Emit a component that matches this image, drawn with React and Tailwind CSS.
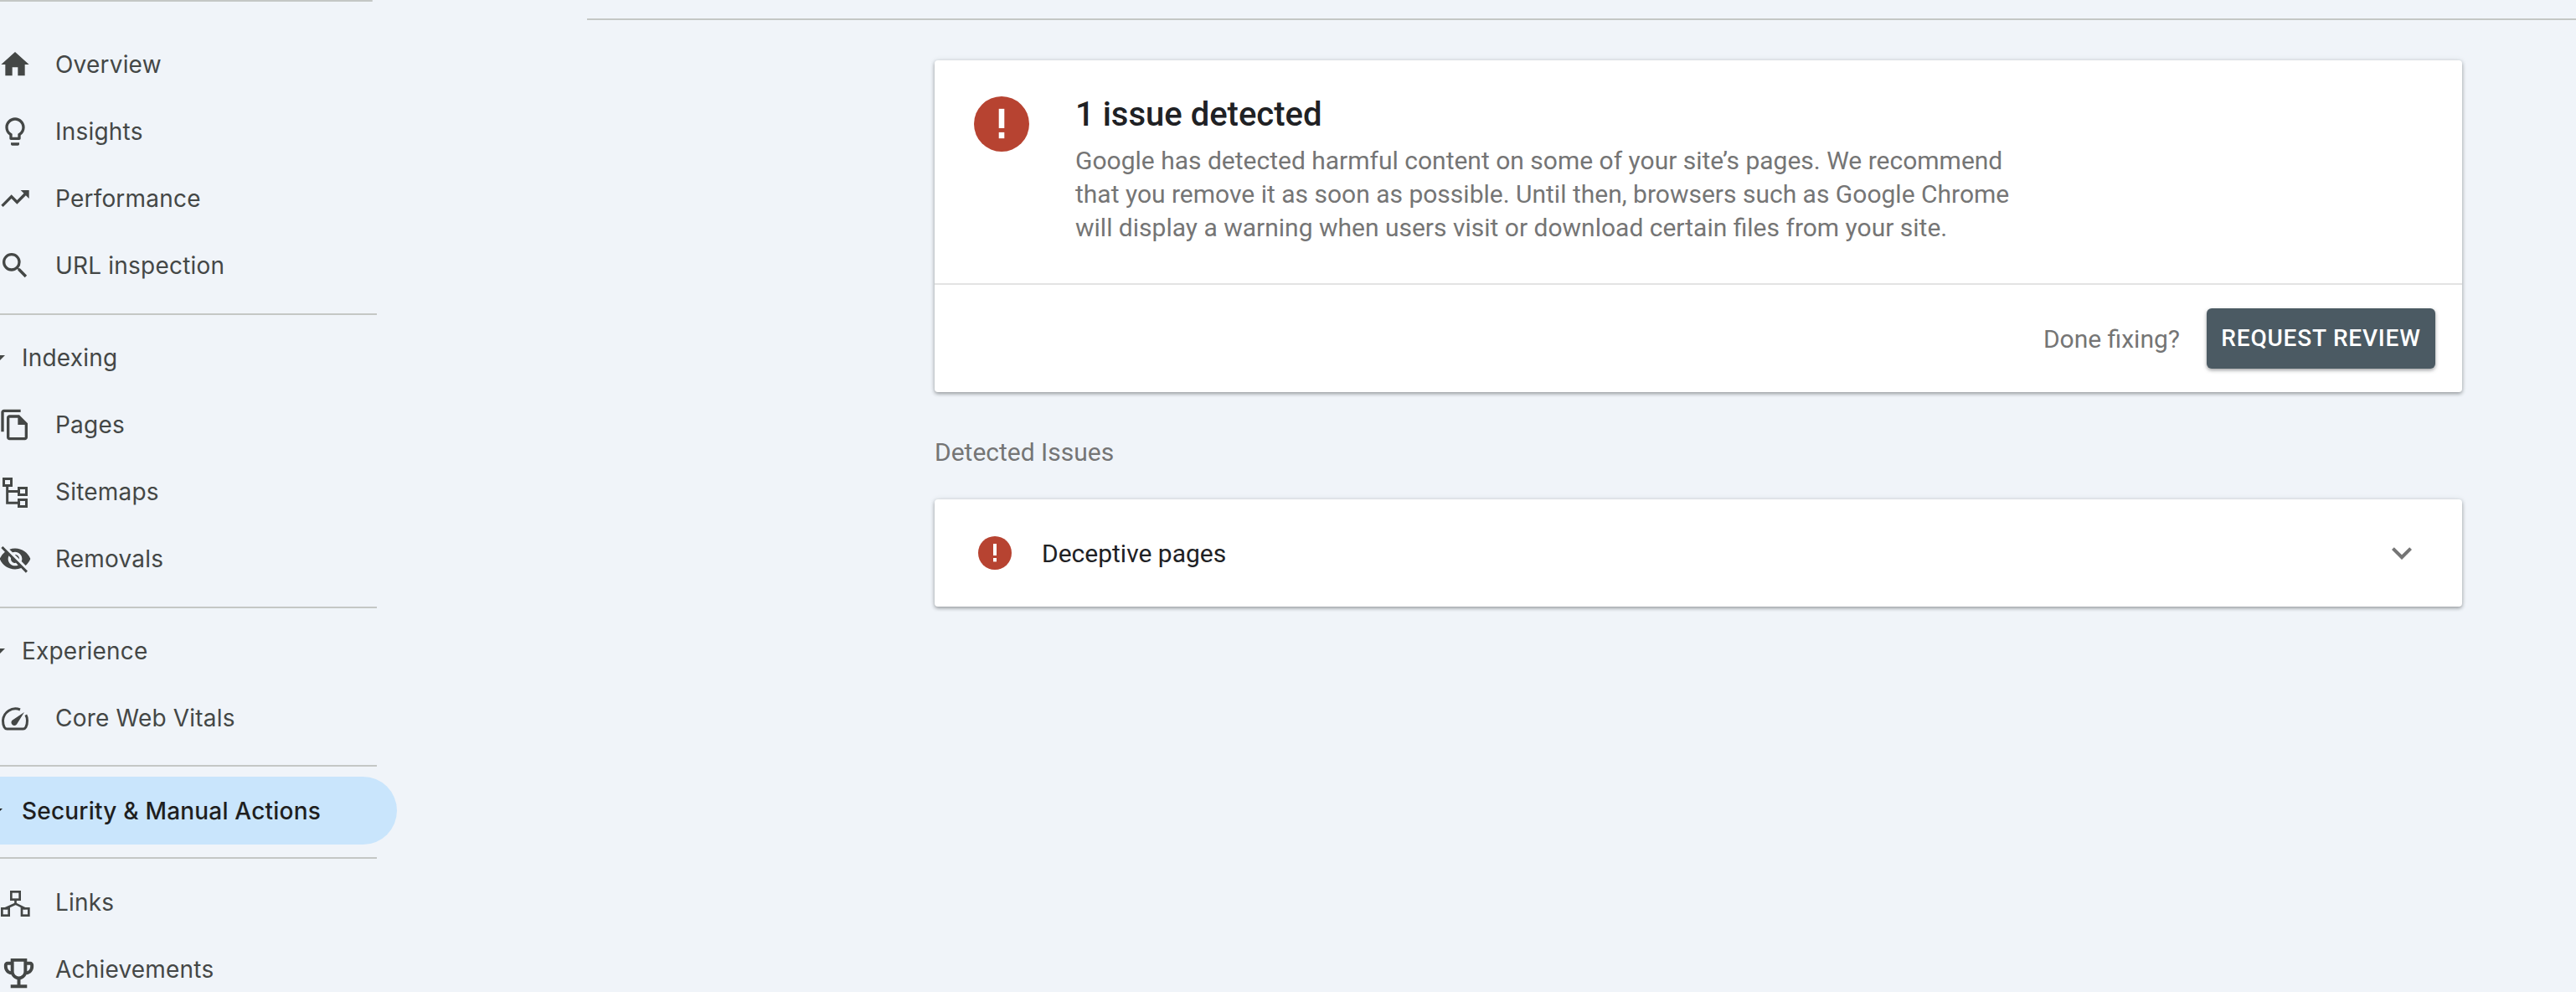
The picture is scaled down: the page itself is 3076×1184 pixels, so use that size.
import React from "react";
import {
  MdHome,
  MdOutlineLightbulb,
  MdTrendingUp,
  MdSearch,
  MdOutlineFileCopy,
  MdVisibilityOff,
  MdOutlineEmojiEvents,
  MdKeyboardArrowDown,
} from "react-icons/md";

const SitemapIcon = () => (
  <svg viewBox="0 0 24 24" className="w-[40px] h-[40px]" fill="none" stroke="currentColor" strokeWidth="1.8">
    <rect x="3.9" y="2.7" width="5.4" height="4.8" />
    <rect x="14.7" y="9.3" width="5.4" height="4.8" />
    <rect x="14.7" y="17.7" width="5.4" height="4.8" />
    <path d="M6.4 7.5V20h8.3M6.4 11.7h8.3" />
  </svg>
);

const GaugeIcon = () => (
  <svg viewBox="0 0 24 24" className="w-[40px] h-[40px]" fill="none" stroke="currentColor" strokeWidth="1.8">
    <path d="M15.6 6A9 9 0 0 0 3.3 13.8c0 2 .3 3.6 1 4.8.4.7 1 1.2 1.9 1.2h11.6c.9 0 1.5-.5 1.9-1.2.7-1.2 1-2.8 1-4.8 0-1.5-.3-2.8-1-4" />
    <path d="M9.9 13.6 18.6 7.8l-5.4 8.7a2.2 2.2 0 1 1-3.3-2.9z" fill="currentColor" stroke="none" />
  </svg>
);

const LinksIcon = () => (
  <svg viewBox="0 0 24 24" className="w-[40px] h-[40px]" fill="none" stroke="currentColor" strokeWidth="1.6">
    <rect x="9.2" y="4.4" width="6.2" height="5.6" />
    <rect x="2.6" y="16.4" width="5" height="5" />
    <rect x="16.8" y="16.4" width="5" height="5" />
    <path d="M12.3 10v3M12.3 13 5 16.4M12.3 13l7 3.4" />
  </svg>
);

const AlertCircle = ({ className }) => (
  <svg viewBox="0 0 20 20" className={className}>
    <circle cx="10" cy="10" r="10" fill="#b74331" />
    <rect x="9" y="4.5" width="2" height="7" fill="#fff" />
    <rect x="9" y="13" width="2" height="2.2" fill="#fff" />
  </svg>
);

const font = "font-['Inter','Liberation_Sans',sans-serif]";

function NavRow({ icon, label }) {
  return (
    <div className={`flex items-center h-[80px] text-[#444746] ${font} text-[28px] tracking-[0.2px]`}>
      <span className="w-[40px] h-[40px] -ml-[2px] flex items-center justify-center text-[40px] shrink-0">{icon}</span>
      <span className="ml-[28px]">{label}</span>
    </div>
  );
}

function SectionRow({ label }) {
  return (
    <div className={`flex items-center h-[80px] text-[#444746] ${font} text-[28px] tracking-[0.2px]`}>
      <svg viewBox="0 0 12 6" className="w-[12px] h-[6px] -ml-[6px] shrink-0" fill="currentColor">
        <path d="M0 0h12L6 6z" />
      </svg>
      <span className="ml-[20px]">{label}</span>
    </div>
  );
}

const Divider = ({ className }) => <div className={`h-[2px] w-[450px] bg-[#c4c7c5] ${className}`} />;

export default function App() {
  return (
    <div className="flex w-[3076px] h-[1184px] overflow-hidden bg-[#f0f4f9] font-['Roboto',sans-serif]">
      <aside className="w-[701px] shrink-0">
        <div className="h-[2px] w-[445px] bg-[#c4c7c5] rounded-r" />
        <div className="mt-[35px]">
          <NavRow icon={<MdHome />} label="Overview" />
          <NavRow icon={<MdOutlineLightbulb />} label="Insights" />
          <NavRow icon={<MdTrendingUp />} label="Performance" />
          <NavRow icon={<MdSearch />} label="URL inspection" />
        </div>
        <Divider className="mt-[17px]" />
        <div className="mt-[11px]">
          <SectionRow label="Indexing" />
          <NavRow icon={<MdOutlineFileCopy />} label="Pages" />
          <NavRow icon={<SitemapIcon />} label="Sitemaps" />
          <NavRow icon={<MdVisibilityOff />} label="Removals" />
        </div>
        <Divider className="mt-[17px]" />
        <div className="mt-[11px]">
          <SectionRow label="Experience" />
          <NavRow icon={<GaugeIcon />} label="Core Web Vitals" />
        </div>
        <Divider className="mt-[16px]" />
        <div className={`mt-[12px] flex items-center h-[81px] w-[474px] rounded-r-full bg-[#c9e5fc] text-[#1f1f1f] ${font} text-[28px] tracking-[0.2px]`}>
          <svg viewBox="0 0 12 6" className="w-[12px] h-[6px] -ml-[9px] shrink-0" fill="currentColor">
            <path d="M0 0h12L6 6z" />
          </svg>
          <span className="ml-[23px] font-medium">Security &amp; Manual Actions</span>
        </div>
        <Divider className="mt-[15px]" />
        <div className="mt-[12px]">
          <NavRow icon={<LinksIcon />} label="Links" />
          <NavRow
            icon={<MdOutlineEmojiEvents className="shrink-0 text-[47px] translate-x-[4px] translate-y-[4px]" />}
            label="Achievements"
          />
        </div>
      </aside>

      <main className="flex-1 min-w-0">
        <div className="h-[2px] mt-[22px] bg-[#c4c7c5]" />
        <div className="ml-[415px] w-[1824px] mt-[48px]">
          <section className="bg-white rounded-[4px] shadow-[0_2px_4px_rgba(60,64,67,0.45),0_0_6px_rgba(60,64,67,0.12)]">
            <div className="flex h-[266px] pt-[43px] pl-[47px]">
              <AlertCircle className="w-[66px] h-[66px] shrink-0" />
              <div className="ml-[55px]">
                <h1 className="mt-[2px] text-[40px] leading-[40px] font-medium text-[#202124]">1 issue detected</h1>
                <p className="mt-[15px] w-[1140px] text-[30px] leading-[40px] text-[#757575]">
                  Google has detected harmful content on some of your site’s pages. We recommend
                  <br />
                  that you remove it as soon as possible. Until then, browsers such as Google Chrome
                  <br />
                  will display a warning when users visit or download certain files from your site.
                </p>
              </div>
            </div>
            <div className="flex items-center justify-end h-[130px] border-t-2 border-[#e3e3e3] pr-[32px]">
              <span className="text-[30px] text-[#757575]">Done fixing?</span>
              <button className="ml-[32px] w-[273px] h-[72px] rounded-[6px] bg-[#4b5a63] text-white text-[28px] font-medium tracking-[0.8px] shadow-[0_2px_4px_rgba(60,64,67,0.5)]">
                REQUEST REVIEW
              </button>
            </div>
          </section>

          <h2 className="mt-[52px] text-[30px] leading-[40px] text-[#757575]">Detected Issues</h2>

          <section className="mt-[36px] h-[128px] flex items-center bg-white rounded-[4px] pl-[52px] pr-[48px] shadow-[0_2px_4px_rgba(60,64,67,0.45),0_0_6px_rgba(60,64,67,0.12)]">
            <AlertCircle className="w-[40px] h-[40px] shrink-0" />
            <span className="ml-[36px] text-[30px] text-[#202124]">Deceptive pages</span>
            <MdKeyboardArrowDown className="ml-auto text-[#757575] text-[48px]" />
          </section>
        </div>
      </main>
    </div>
  );
}
